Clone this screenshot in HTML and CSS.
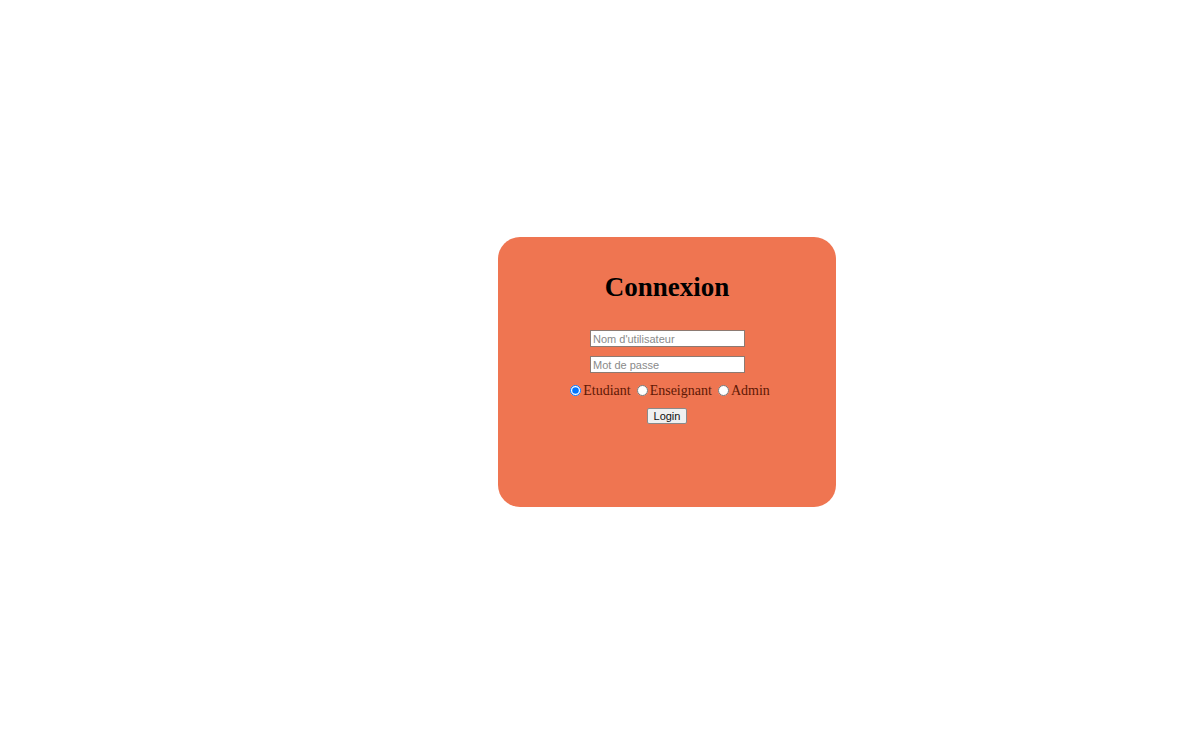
FILE: index.html
```html
<!DOCTYPE html>
<html lang="fr">
<head>
<meta charset="utf-8">
<title>Connexion</title>
<link rel="stylesheet" href="styles.css">
</head>
<body>
<main class="page">
  <section class="card">
    <h1 class="title">Connexion</h1>
    <form class="form">
      <input class="field" type="text" placeholder="Nom d'utilisateur">
      <input class="field" type="password" placeholder="Mot de passe">
      <div class="roles">
        <label class="role"><input class="radio" type="radio" name="role" checked>Etudiant</label>
        <label class="role"><input class="radio" type="radio" name="role">Enseignant</label>
        <label class="role"><input class="radio" type="radio" name="role">Admin</label>
      </div>
      <button class="btn" type="button">Login</button>
    </form>
  </section>
</main>
</body>
</html>
```
FILE: styles.css
```css
html, body {
  margin: 0;
  padding: 0;
  background: #ffffff;
}
.page {
  height: 742px;
  display: flex;
  align-items: center;
  justify-content: center;
}
.card {
  margin-left: 134px;
  margin-top: 2px;
  width: 338px;
  height: 270px;
  box-sizing: border-box;
  border-radius: 22px;
  background: #ef7551;
  padding-top: 35px;
  display: flex;
  flex-direction: column;
  align-items: center;
}
.title {
  margin: 0;
  font: 700 27px/30px "Liberation Serif", serif;
  color: #000;
}
.form {
  margin-top: 28px;
  display: flex;
  flex-direction: column;
  align-items: center;
}
.field {
  width: 155px;
  height: 17px;
  box-sizing: border-box;
  margin: 0 0 9px 1px;
  padding: 0 2px;
  border: 1px solid #8c7a72;
  background: #fff;
  font: 11px "Liberation Sans", sans-serif;
  color: #222;
}
.field::placeholder {
  color: #8a8a8a;
}
.roles {
  display: flex;
  align-items: center;
  margin-top: 1px;
  margin-left: 3px;
  font: 14px/16px "Liberation Serif", serif;
  color: #5e1805;
}
.role {
  display: flex;
  align-items: center;
  margin-right: 3px;
}
.role:last-child {
  margin-right: 0;
}
.radio {
  width: 11px;
  height: 11px;
  margin: 0 2px 1px 3px;
}
.btn {
  margin-top: 9px;
  width: 40px;
  height: 16px;
  padding: 0;
  box-sizing: border-box;
  border: 1px solid #8a8a8a;
  border-radius: 2px;
  background: #f0f0f0;
  font: 11px/14px "Liberation Sans", sans-serif;
  color: #111;
}
```
